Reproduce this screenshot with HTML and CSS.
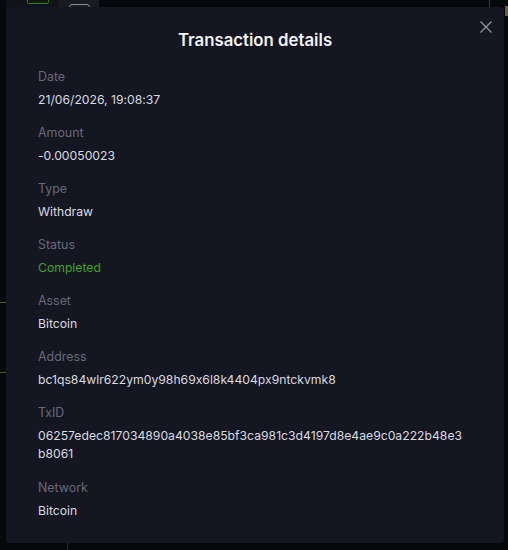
FILE: index.html
```html
<!DOCTYPE html>
<html lang="en">
<head>
<meta charset="utf-8">
<title>Transaction details</title>
<link rel="stylesheet" href="styles.css">
</head>
<body>
<div class="backdrop">
  <div class="bg-tab"><span class="bg-green"></span></div>
  <div class="bg-tab2"><span class="bg-pill"></span></div>
  <span class="bg-vline"></span>
  <span class="bg-gold"></span>
  <span class="bg-hline h1"></span>
  <span class="bg-hline h2"></span>
  <span class="bg-vline2"></span>
</div>
<div class="modal">
  <button class="close" aria-label="Close">
    <svg width="12" height="12" viewBox="0 0 12 12"><path d="M0.5 0.5 L11.5 11.5 M11.5 0.5 L0.5 11.5" stroke="#9a9ca6" stroke-width="1.1" fill="none"/></svg>
  </button>
  <h2 class="title">Transaction details</h2>
  <dl class="fields">
    <div class="field"><dt>Date</dt><dd>21/06/2026, 19:08:37</dd></div>
    <div class="field"><dt>Amount</dt><dd>-0.00050023</dd></div>
    <div class="field"><dt>Type</dt><dd>Withdraw</dd></div>
    <div class="field"><dt>Status</dt><dd class="ok">Completed</dd></div>
    <div class="field"><dt>Asset</dt><dd>Bitcoin</dd></div>
    <div class="field"><dt>Address</dt><dd>bc1qs84wlr622ym0y98h69x6l8k4404px9ntckvmk8</dd></div>
    <div class="field"><dt>TxID</dt><dd class="hash">06257edec817034890a4038e85bf3ca981c3d4197d8e4ae9c0a222b48e3b8061</dd></div>
    <div class="field"><dt>Network</dt><dd>Bitcoin</dd></div>
  </dl>
</div>
</body>
</html>
```
FILE: styles.css
```css
html, body {
  margin: 0;
  padding: 0;
}
body {
  background: #07080c;
  font-family: "Inter", "Noto Sans", sans-serif;
  font-feature-settings: "calt" 0;
  width: 508px;
  height: 550px;
  overflow: hidden;
  position: relative;
}
.backdrop {
  position: absolute;
  inset: 0;
}
.bg-tab {
  position: absolute;
  left: 6px; top: 0; width: 52px; height: 7px;
  background: #121319;
}
.bg-green {
  position: absolute;
  left: 21px; top: -2px; width: 20px; height: 4px;
  border: 1px solid #2f7a1e;
  border-radius: 2px;
  background: #0d1a0c;
}
.bg-tab2 {
  position: absolute;
  left: 58px; top: 0; width: 41px; height: 7px;
  background: #1a1b22;
}
.bg-pill {
  position: absolute;
  left: 11px; top: 4px; width: 19px; height: 6px;
  border: 1px solid #8a8b93;
  border-radius: 3px;
}
.bg-vline {
  position: absolute;
  left: 489px; top: 0; width: 1px; height: 7px;
  background: #3a3b42;
}
.bg-gold {
  position: absolute;
  left: 505px; top: 6px; width: 3px; height: 10px;
  background: #6b5d3a;
}
.bg-hline {
  position: absolute;
  left: 0; width: 6px; height: 1px;
  background: #4c5a2a;
}
.bg-hline.h1 { top: 302px; }
.bg-hline.h2 { top: 372px; }
.bg-vline2 {
  position: absolute;
  left: 67px; top: 543px; width: 1px; height: 7px;
  background: #2a2b31;
}
.modal {
  position: relative;
  margin: 7px 0 0 6px;
  width: 498px;
  height: 536px;
  box-sizing: border-box;
  background: #141621;
  border-radius: 4px;
  padding: 21px 38px 0 32px;
}
.close {
  position: absolute;
  top: 14px;
  right: 12px;
  width: 12px;
  height: 12px;
  padding: 0;
  border: 0;
  background: none;
  line-height: 0;
}
.title {
  margin: 0 -6px 0 0;
  text-align: center;
  font-size: 16.8px;
  font-weight: 600;
  line-height: 24px;
  color: #f2f3f5;
}
.fields {
  margin: 16px 0 0 0;
  display: flex;
  flex-direction: column;
  gap: 16px;
}
.field {
  display: flex;
  flex-direction: column;
  gap: 5px;
}
dt {
  font-size: 12.4px;
  line-height: 18px;
  color: #676a7a;
}
dd {
  margin: 0;
  font-size: 12.2px;
  line-height: 17px;
  color: #dadbe0;
}
dd.ok {
  color: #3ea522;
}
dd.hash {
  word-break: break-all;
  line-height: 18px;
}
```
